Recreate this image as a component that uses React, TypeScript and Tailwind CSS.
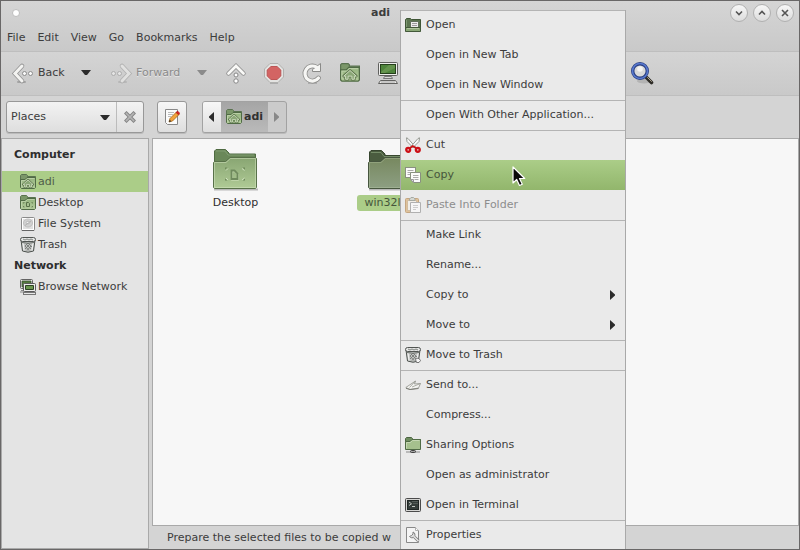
import React from "react";

type IconProps = { className?: string };

/* ---------- folder artwork ---------- */

function SmallFolder({ children, className = "size-4" }: IconProps & { children?: React.ReactNode }) {
  return (
    <svg viewBox="0 0 16 16" className={`shrink-0 ${className}`} aria-hidden="true">
      <defs>
        <linearGradient id="sf" x1="0" y1="0" x2="0" y2="1">
          <stop offset="0" stopColor="#94b37e" />
          <stop offset="1" stopColor="#b3cb9c" />
        </linearGradient>
      </defs>
      <path d="M.5 13V1.500L1.500.5H6.500L7.500 1.500V2.500H15.500V10H.5z" fill="#7b9769" stroke="#5a7350" />
      <path d="M.5 13.500V5.500H5L7 3.500H15.500V13.500L14.500 14.500H1.500z" fill="url(#sf)" stroke="#506b45" />
      <path d="M1.500 12.500V6.500H5.500L7.500 4.500H14.500" fill="none" stroke="#c6d9b3" strokeOpacity=".7" />
      {children}
    </svg>
  );
}

function HomeFolder({ className }: IconProps) {
  return (
    <SmallFolder className={className}>
      <path d="M3 10.500L8 6L13 10.500H11.500V13H9.500V10.500H6.500V13H4.500V10.500z" fill="#a9c492" stroke="#60794f" strokeWidth="2.200" strokeLinejoin="round" />
      <path d="M3 10.500L8 6L13 10.500H11.500V13H9.500V10.500H6.500V13H4.500V10.500z" fill="#8ba777" stroke="#cfdec0" strokeWidth=".8" strokeLinejoin="round" />
    </SmallFolder>
  );
}

function DesktopFolder() {
  return (
    <SmallFolder>
      <path d="M6.500 7.500H8.500L9.500 8.500V11.500H6.500z" fill="none" stroke="#587049" />
      <path d="M3.500 8.500V7.500H4.500M11.500 7.500H12.500V8.500M3.500 11V12H4.500M11.500 12H12.500V11" fill="none" stroke="#6c8559" />
    </SmallFolder>
  );
}

function OpenFolder() {
  return (
    <svg viewBox="0 0 16 16" className="size-4 shrink-0" aria-hidden="true">
      <path d="M.5 14V2.500L1.500 1.500H5.500L6.500 2.500H15.500V14z" fill="#5b7550" stroke="#3f5536" />
      <path d="M1.500 3V12" stroke="#7e9973" />
      <path d="M5.500 4.500H13.500V11H5.500z" fill="#ececec" stroke="#60705a" />
      <path d="M7 6.500H12M7 8.500H12" stroke="#9b9b9b" />
      <path d="M.5 10.500H15.500V14.500H.5z" fill="#8aa877" stroke="#43593a" />
      <path d="M2 11.500H14" stroke="#b0c69f" />
    </svg>
  );
}

function SharedFolder() {
  return (
    <svg viewBox="0 0 16 16" className="size-4 shrink-0" aria-hidden="true">
      <path d="M.5 11V1.500L1.500.5H6.500L7.500 1.500V2.500H15.500V8z" fill="#6f8d60" stroke="#4c6542" />
      <path d="M.5 12.500V4.500H5L7 2.500H15.500V12.500z" fill="#a5c08d" stroke="#506b45" />
      <path d="M1.500 11.500V5.500H5.500L7.500 3.500H14.500" fill="none" stroke="#c5d7b3" />
      <path d="M1 15H15" stroke="#8a8a8a" />
      <rect x="5.500" y="13.500" width="5" height="2" rx="1" fill="#a4a4a4" stroke="#424242" />
    </svg>
  );
}

function LargeFolder({ active = false }: { active?: boolean }) {
  const id = active ? "fa" : "fn";
  return (
    <svg viewBox="0 0 48 44" className="h-[44px] w-[48px]" aria-hidden="true">
      <defs>
        <linearGradient id={id} x1="0" y1="0" x2="0" y2="1">
          <stop offset="0" stopColor={active ? "#77885f" : "#88a572"} />
          <stop offset="1" stopColor={active ? "#8d9f83" : "#b0cb96"} />
        </linearGradient>
      </defs>
      <path d="M2 40.500H46" stroke="#000" strokeOpacity=".25" strokeWidth="2" />
      <path
        d={active
          ? "M2.500 36V3L4 1.500H14.500L18 5V6.500H43.500V36z"
          : "M2.500 36V2L4 .5H13.500L17 4V5H43.500V36z"}
        fill={active ? "#4a5c3f" : "#6a8859"}
        stroke={active ? "#37462f" : "#4f6b42"}
      />
      <path d={active ? "M4 3.500H14L17 7.500H42" : "M4 2H13L16 6H42"} fill="none" stroke="#91ab82" strokeOpacity=".6" />
      <path d="M1.500 38.500V13.500L2.500 12.500H13.500L18 8.500H43.500L44.500 9.500V38.500L43.500 39.500H2.500z" fill={`url(#${id})`} stroke={active ? "#47563f" : "#587149"} />
      <path d="M2.500 38.500V13.500H14L18.500 9.500H43.500V38.500z" fill="none" stroke="#d5e5c4" strokeOpacity={active ? ".25" : ".5"} />
      {!active && (
        <g fill="none">
          <path d="M20 22.500H23L26 25.500V31H20z" stroke="#c6dab1" strokeWidth="1.500" />
          <path d="M19.500 21.500H22.500L25.500 24.500V30H19.500z" stroke="#6f8a5d" strokeWidth="1.800" />
          <path d="M13 20.500V18.500H15.500L13 20.500zM30.500 18.500H33V20.500zM13 29.500V31.500H15.500zM33 29.500V31.500H30.500z" fill="#6c8759" />
          <path d="M14 21.500L16 19.500M30 19.500L32.500 21.500M14 29L16 31M30 31L32.500 29" stroke="#cfe0be" />
        </g>
      )}
    </svg>
  );
}

/* ---------- sidebar and menu icons ---------- */

function DriveIcon() {
  return (
    <svg viewBox="0 0 16 16" className="size-4 shrink-0" aria-hidden="true">
      <rect x="1.500" y="1.500" width="13" height="13" rx="1" fill="#efefef" stroke="#8a8a8a" />
      <rect x="2.500" y="2.500" width="11" height="11" fill="#e0e0e0" stroke="#fff" />
      <ellipse cx="8" cy="7" rx="4.500" ry="4" fill="#d2d2d2" stroke="#c0c0c0" />
      <ellipse cx="8" cy="6.500" rx="1.800" ry="1.300" fill="#f2f2f2" stroke="#aaa" strokeWidth=".7" />
      <path d="M5 9.500L11 5" stroke="#b3b3b3" />
      <path d="M2 14.500H14" stroke="#666" />
    </svg>
  );
}

function TrashIcon({ moving = false }: { moving?: boolean }) {
  return (
    <svg viewBox="0 0 16 16" className="size-4 shrink-0" aria-hidden="true">
      <path d="M1 3L2.500 14Q8 16.500 13.500 14L15 3z" fill="#c3c5c3" stroke="#4c514d" />
      <path d="M3 6L4 13.500M13 6L12 13.500" stroke="#efefef" strokeWidth="1.200" />
      <path d="M6 7L11 12M5 9L9 13.500M8 6L12 10M10 7L5 12M11 9L7 13.500M8 6L5 9" stroke="#777a77" strokeWidth=".9" />
      <rect x=".5" y=".5" width="15" height="4" rx="2" fill="#e4e5e4" stroke="#515552" />
      <path d="M3 2L5 3L7 2L9 3L11 2L13 3" fill="none" stroke="#838783" />
      <path d="M2 5.500Q8 7 14 5.500" fill="none" stroke="#6b706c" />
      {moving && (
        <path d="M10.500 12.500Q12 10.500 14 11.500L15.500 13.500L14 15.500H11.500z" fill="#f5f5f5" stroke="#666" strokeWidth=".9" />
      )}
    </svg>
  );
}

function NetworkIcon() {
  return (
    <svg viewBox="0 0 16 16" className="size-4 shrink-0" aria-hidden="true">
      <rect x=".5" y=".5" width="12" height="9" rx="1" fill="#e9e9e9" stroke="#636363" />
      <path d="M2 2H11V8H2z" fill="#547a3e" stroke="#3a5133" strokeWidth=".8" />
      <path d="M1 11.500H4M0 13H4" stroke="#888" />
      <rect x="3.500" y="4.500" width="12" height="8" rx="1" fill="#ededed" stroke="#5b5b5b" />
      <path d="M5.500 6.500H13.500V10.500H5.500z" fill="#6a964f" stroke="#2d4324" />
      <rect x="3.500" y="13.500" width="12" height="2" fill="#e8e8e8" stroke="#777" />
    </svg>
  );
}

function ScissorsIcon() {
  return (
    <svg viewBox="0 0 16 16" className="size-4 shrink-0" aria-hidden="true">
      <path d="M1.500.8L2 4.500L8.500 11L10 9.500L3 1.500z" fill="#f8f8f8" stroke="#8b8f88" strokeWidth=".9" />
      <path d="M14.500.8L14 4.500L7.500 11L6 9.500L13 1.500z" fill="#f8f8f8" stroke="#8b8f88" strokeWidth=".9" />
      <path d="M5 11L7.800 9L11 11" fill="none" stroke="#c81414" strokeWidth="1.800" />
      <circle cx="3.200" cy="12.800" r="2" fill="#e6b0b0" stroke="#cc0f16" strokeWidth="2.200" />
      <circle cx="12.800" cy="12.800" r="2" fill="#e6b0b0" stroke="#cc0f16" strokeWidth="2.200" />
    </svg>
  );
}

function CopyIcon() {
  return (
    <svg viewBox="0 0 16 16" className="size-4 shrink-0" aria-hidden="true">
      <rect x=".5" y=".5" width="10" height="10" fill="#fbfbfb" stroke="#899080" />
      <path d="M2.500 3.500H8.500M2.500 5.500H8.500M2.500 7.500H6" stroke="#aaa" />
      <path d="M5.500 5.500H15.500V15.500H8.500L5.500 12.500z" fill="#fbfbfb" stroke="#899080" />
      <path d="M8 8.500H13.500M8 10.500H13.500M9.500 12.500H13.500" stroke="#aaa" />
      <path d="M5.500 12.500H8.500V15.500z" fill="#ddd" stroke="#999" />
    </svg>
  );
}

function PasteIcon() {
  return (
    <svg viewBox="0 0 16 16" className="size-4 shrink-0" aria-hidden="true">
      <rect x=".5" y="1.500" width="13" height="14" rx="1" fill="#dfc29b" stroke="#c4a681" />
      <rect x="2.500" y="3.500" width="9" height="10" fill="#f1eee8" stroke="#d2bda0" />
      <path d="M4.500 3.500V2L6 .5H8.500L10 2V3.500z" fill="#d5d8d2" stroke="#a6aaa3" />
      <path d="M5.500 5.500H15.500V15.500H5.500z" fill="#f6f6f6" stroke="#b0b0b0" />
      <path d="M8 8.500H13M8 10.500H13M8 12.500H11" stroke="#ccc" />
    </svg>
  );
}

function SendIcon() {
  return (
    <svg viewBox="0 0 16 16" className="size-4 shrink-0" aria-hidden="true">
      <path d="M.8 10.500L10.500 4L9.500 7L15.500 6.500L13.500 11L5 12.500z" fill="#f4f4f2" stroke="#989a93" strokeWidth=".9" strokeLinejoin="round" />
      <path d="M4.500 10.500L10.500 4M7 10L15.500 6.500" fill="none" stroke="#989a92" strokeWidth=".8" />
      <path d="M1 11.300L5 12.500L13.500 11.500" fill="none" stroke="#7c7e77" />
    </svg>
  );
}

function TerminalIcon() {
  return (
    <svg viewBox="0 0 16 16" className="size-4 shrink-0" aria-hidden="true">
      <rect x=".5" y="1.500" width="15" height="13" rx="1" fill="#d6d6d4" stroke="#4b4b4b" />
      <rect x="2.500" y="3.500" width="11" height="9" fill="#343d3a" stroke="#1e2523" />
      <path d="M4 5L6.500 6.800L4 8.500M7 9.500H10" fill="none" stroke="#d0d5d0" strokeWidth=".9" />
      <path d="M7 4.500H13M8 6.500H13" stroke="#535c58" />
    </svg>
  );
}

function PropertiesIcon() {
  return (
    <svg viewBox="0 0 16 16" className="size-4 shrink-0" aria-hidden="true">
      <path d="M1.500.5H10.500L13.500 3.500V15.500H1.500z" fill="#f5f5f5" stroke="#898989" />
      <path d="M10.500 .5V3.500H13.500" fill="#fff" stroke="#b0b0b0" />
      <path d="M8 5A3 3 0 1 1 4.500 9.500L6.500 8.500L8 7z" fill="#dedede" stroke="#808080" />
      <path d="M9.500 10L13.500 14" stroke="#777" strokeWidth="3" />
      <path d="M9 9.500L13.500 14" stroke="#e8e8e8" strokeWidth="1.500" />
    </svg>
  );
}

/* ---------- toolbar icons ---------- */

function BackIcon({ forward = false }: { forward?: boolean }) {
  return (
    <svg viewBox="0 0 24 24" className={forward ? "size-6 shrink-0 -scale-x-100 opacity-50" : "size-6 shrink-0"} aria-hidden="true">
      <path d="M7 21H14" stroke="#000" strokeOpacity=".2" strokeWidth="2" strokeLinecap="round" />
      <path d="M11 5L4 12.500L11 20" fill="none" stroke="#949494" strokeWidth="4.600" strokeLinecap="round" />
      <path d="M11 5L4 12.500L11 20" fill="none" stroke="#f3f3f1" strokeWidth="3" strokeLinecap="round" />
      <circle cx="13.500" cy="12.500" r="2" fill="#fafafa" stroke="#8d8d8d" />
      <circle cx="19.500" cy="12.500" r="2" fill="#fafafa" stroke="#8d8d8d" />
    </svg>
  );
}

function UpIcon() {
  return (
    <svg viewBox="0 0 24 24" className="size-6" aria-hidden="true">
      <path d="M4.500 12.500L12 5L19.500 12.500" fill="none" stroke="#8d8d8d" strokeWidth="4.400" strokeLinecap="round" />
      <path d="M4.500 12.500L12 5L19.500 12.500" fill="none" stroke="#f9f9f7" strokeWidth="2.800" strokeLinecap="round" />
      <circle cx="12" cy="14" r="2" fill="#fff" stroke="#858585" />
      <circle cx="12" cy="20" r="2.200" fill="#fff" stroke="#858585" />
    </svg>
  );
}

function StopIcon() {
  return (
    <svg viewBox="0 0 24 24" className="size-6" aria-hidden="true">
      <path d="M8 22H16" stroke="#000" strokeOpacity=".15" strokeWidth="2" />
      <path d="M8 2.500H16L21.500 8V16L16 21.500H8L2.500 16V8z" fill="#e3e3e1" stroke="#b0b0ae" />
      <path d="M9 5.500H15L18.800 9V15L15 18.500H9L5.200 15V9z" fill="#d36463" stroke="#bd5555" />
    </svg>
  );
}

function ReloadIcon() {
  return (
    <svg viewBox="0 0 24 24" className="size-6" aria-hidden="true">
      <path d="M8 22H17" stroke="#000" strokeOpacity=".15" strokeWidth="2" />
      <path d="M16.500 6.200A7.500 7.500 0 1 0 18.500 17" fill="none" stroke="#8a8a88" strokeWidth="4.800" strokeLinecap="round" />
      <path d="M20.500 2.500V10.500H12.500V8.500z" fill="#f6f6f4" stroke="#8a8a88" strokeLinejoin="round" />
      <path d="M16.500 6.200A7.500 7.500 0 1 0 18.500 17" fill="none" stroke="#f6f6f4" strokeWidth="3.200" strokeLinecap="round" />
    </svg>
  );
}

function ComputerIcon() {
  return (
    <svg viewBox="0 0 24 24" className="size-6" aria-hidden="true">
      <rect x="2.500" y="1.500" width="19" height="13" rx="1" fill="#ededeb" stroke="#60605e" />
      <rect x="4.500" y="3.500" width="15" height="9" fill="#4e843b" stroke="#25401c" />
      <path d="M5 11L13 4H19V7L9 12H5z" fill="#78a35f" fillOpacity=".55" />
      <path d="M8.500 15.500H15.500L16.500 17.500H7.500z" fill="#d7d7d5" stroke="#777" />
      <path d="M4.500 19.500L2.500 22.500H21.500L19.500 19.500z" fill="#f0f0ee" stroke="#626260" />
      <path d="M5 21H19" stroke="#a0a0a0" />
    </svg>
  );
}

function SearchIcon() {
  return (
    <svg viewBox="0 0 24 24" className="size-6" aria-hidden="true">
      <ellipse cx="14" cy="20" rx="7" ry="2.500" fill="#000" fillOpacity=".12" />
      <path d="M16.500 16.500L21.500 21.500" stroke="#2d2b26" strokeWidth="3.600" strokeLinecap="round" />
      <path d="M17.500 16.500L21.500 20.500" stroke="#aaa08b" strokeWidth="1" strokeLinecap="round" />
      <circle cx="10" cy="10" r="7.300" fill="#d9d9d9" stroke="#2a3f80" strokeWidth="3.400" />
      <circle cx="10" cy="10" r="7.500" fill="none" stroke="#5878cf" strokeWidth="1.600" />
      <circle cx="10" cy="8" r="2.800" fill="#f4f4f4" />
    </svg>
  );
}

function PencilNoteIcon() {
  return (
    <svg viewBox="0 0 16 16" className="size-4" aria-hidden="true">
      <path d="M1.500 .5H13.500V15.500H3.500L1.500 13.500z" fill="#fbfbfb" stroke="#888" />
      <path d="M4 3.500H10M4 5.500H9M4 7.500H7" stroke="#bbb" />
      <path d="M5 13L6 9.500L12.500 3L15 5.500L8.500 12z" fill="#f2a33b" stroke="#9e6319" strokeWidth=".8" />
      <path d="M12 3.500L13.500 2L15.800 4.300L14.500 5.800z" fill="#d52020" stroke="#a51414" strokeWidth=".6" />
      <path d="M5 13L5.700 10.700L7.300 12.200z" fill="#2b2b2b" />
    </svg>
  );
}

function Triangle({ dir, className = "fill-[#2b2b2b]" }: { dir: "down" | "left" | "right" } & IconProps) {
  if (dir === "down")
    return (
      <svg viewBox="0 0 10 6" className={`h-[6px] w-[10px] shrink-0 ${className}`} aria-hidden="true">
        <path d="M0 0H10L6 5H4z" />
      </svg>
    );
  return (
    <svg viewBox="0 0 6 10" className={`h-[10px] w-[6px] shrink-0 ${className}`} aria-hidden="true">
      <path d={dir === "left" ? "M5 0V10L0 5.500V4.500z" : "M0 0V10L5 5.500V4.500z"} />
    </svg>
  );
}

function CloseGlyph() {
  return (
    <svg viewBox="0 0 12 12" className="size-3" aria-hidden="true">
      <path d="M2.500 2.500L9.500 9.500M9.500 2.500L2.500 9.500" stroke="#858585" strokeWidth="3.600" strokeLinecap="square" />
      <path d="M2.500 2.500L9.500 9.500M9.500 2.500L2.500 9.500" stroke="#b5b5b5" strokeWidth="1.600" strokeLinecap="square" />
    </svg>
  );
}

function Pointer() {
  return (
    <svg viewBox="0 0 14 21" className="absolute left-[111px] top-[156px] h-[21px] w-[14px]" aria-hidden="true">
      <path d="M1 1V17L4.700 13.500L7.500 19.500L10.300 18.200L7.500 12.500H12.700z" fill="#0a0a0a" stroke="#fff" strokeWidth="1.200" strokeLinejoin="round" />
    </svg>
  );
}

/* ---------- page parts ---------- */

const windowButtons = [
  { label: "Minimize", d: "M3 4.500L6 7.500L9 4.500" },
  { label: "Maximize", d: "M3 7.500L6 4.500L9 7.500" },
  { label: "Close", d: "M3 3L9 9M9 3L3 9" },
];

function TitleBar() {
  return (
    <header className="flex h-6 items-center pl-[11px] pr-[5px]">
      <span className="size-2 rounded-full border border-[#bdbdbd] bg-white" />
      <h1 className="flex-1 pl-[11px] text-center font-bold">adi</h1>
      <div className="flex gap-[5px]">
        {windowButtons.map((b) => (
          <button key={b.label} aria-label={b.label} className="flex size-[18px] items-center justify-center rounded-full border border-[#b0b0b0] bg-gradient-to-b from-[#f7f7f7] to-[#dcdcdc]">
            <svg viewBox="0 0 12 12" className="size-3 shrink-0" aria-hidden="true">
              <path d={b.d} fill="none" stroke="#555555" strokeWidth="1.600" />
            </svg>
          </button>
        ))}
      </div>
    </header>
  );
}

function Toolbar() {
  return (
    <div className="flex h-[44px] shrink-0 items-center border-b border-[#bebebe] bg-gradient-to-b from-[#d4d4d4] to-[#c9c9c9] pb-[2px] pl-[10px]">
      <button className="flex w-[70px] items-center gap-[3px]">
        <BackIcon />
        Back
      </button>
      <button aria-label="Back history" className="flex w-[28px] items-center">
        <Triangle dir="down" />
      </button>
      <button disabled className="flex w-[88px] items-center gap-[3px] text-[#8b8b8b] text-shadow-[0_1px_0_#e6e6e6]">
        <BackIcon forward />
        Forward
      </button>
      <button disabled aria-label="Forward history" className="flex w-[20px] items-center">
        <Triangle dir="down" className="fill-[#8b8b8b]" />
      </button>
      <button aria-label="Up" className="flex w-[38px] justify-center"><UpIcon /></button>
      <button aria-label="Stop" className="flex w-[38px] justify-center"><StopIcon /></button>
      <button aria-label="Reload" className="flex w-[38px] justify-center"><ReloadIcon /></button>
      <button aria-label="Home" className="flex w-[38px] justify-center"><HomeFolder className="size-5" /></button>
      <button aria-label="Computer" className="flex w-[38px] justify-center"><ComputerIcon /></button>
      <button aria-label="Search" className="ml-[216px] flex w-[38px] justify-center"><SearchIcon /></button>
    </div>
  );
}

function LocationBar() {
  return (
    <div className="flex h-[42px] shrink-0 items-center pl-[5px]">
      <div className="flex h-8 w-[138px] rounded-[3px] border border-[#989898] bg-gradient-to-b from-[#f3f3f3] to-[#dedede] shadow-[0_1px_0_#bbb]">
        <div className="relative flex-1 border-r border-[#bcbcbc]">
          <select aria-label="Side pane" className="size-full appearance-none bg-transparent pl-1 outline-none">
            <option>Places</option>
          </select>
          <span className="pointer-events-none absolute right-[6px] top-[13px]">
            <Triangle dir="down" />
          </span>
        </div>
        <button aria-label="Close side pane" className="flex w-[26px] items-center justify-center">
          <CloseGlyph />
        </button>
      </div>
      <button aria-label="Edit location" className="ml-[13px] flex h-8 w-[30px] items-center justify-center rounded-[3px] border border-[#989898] bg-gradient-to-b from-[#f7f7f7] to-[#dedede] shadow-[0_1px_0_#bbb]">
        <PencilNoteIcon />
      </button>
      <nav aria-label="Path" className="ml-[15px] flex h-8 overflow-hidden rounded-[3px] border border-[#a2a2a2] bg-[#cbcbcb] shadow-[0_1px_0_#bbb]">
        <button aria-label="Previous" className="flex w-[18px] items-center justify-center bg-gradient-to-b from-[#f7f7f7] to-[#dedede]">
          <Triangle dir="left" />
        </button>
        <button className="flex w-[47px] items-center justify-center gap-[2px] bg-gradient-to-b from-[#a5a5a5] to-[#bababa] font-bold text-[#303030]">
          <HomeFolder />
          adi
        </button>
        <button disabled aria-label="Next" className="flex w-[18px] items-center justify-center">
          <Triangle dir="right" className="fill-[#888888]" />
        </button>
      </nav>
    </div>
  );
}

function Place({ icon, label, selected = false }: { icon: React.ReactNode; label: string; selected?: boolean }) {
  return (
    <li>
      <a href="#" className={`flex h-[21px] items-center gap-[2px] pl-[18px] ${selected ? "bg-[#abcd88] text-[#4f5c48]" : ""}`}>
        {icon}
        {label}
      </a>
    </li>
  );
}

function Sidebar() {
  return (
    <aside className="w-[148px] shrink-0 border border-[#a9a9a9] bg-[#e4e4e4] pt-[5px]">
      <h2 className="mb-[6px] h-[21px] pl-3 font-bold leading-[21px] text-[#2e2e2e]">Computer</h2>
      <ul>
        <Place icon={<HomeFolder />} label="adi" selected />
        <Place icon={<DesktopFolder />} label="Desktop" />
        <Place icon={<DriveIcon />} label="File System" />
        <Place icon={<TrashIcon />} label="Trash" />
      </ul>
      <h2 className="h-[21px] pl-3 font-bold leading-[21px] text-[#2e2e2e]">Network</h2>
      <ul>
        <Place icon={<NetworkIcon />} label="Browse Network" />
      </ul>
    </aside>
  );
}

type MenuEntry = { label: string; icon?: React.ReactNode; state?: "active" | "disabled"; sub?: boolean; line?: boolean };

const menuEntries: MenuEntry[] = [
  { label: "Open", icon: <OpenFolder />, line: true },
  { label: "Open in New Tab" },
  { label: "Open in New Window" },
  { label: "Open With Other Application...", line: true },
  { label: "Cut", icon: <ScissorsIcon />, line: true },
  { label: "Copy", icon: <CopyIcon />, state: "active" },
  { label: "Paste Into Folder", icon: <PasteIcon />, state: "disabled" },
  { label: "Make Link", line: true },
  { label: "Rename..." },
  { label: "Copy to", sub: true },
  { label: "Move to", sub: true },
  { label: "Move to Trash", icon: <TrashIcon moving />, line: true },
  { label: "Send to...", icon: <SendIcon />, line: true },
  { label: "Compress..." },
  { label: "Sharing Options", icon: <SharedFolder /> },
  { label: "Open as administrator" },
  { label: "Open in Terminal", icon: <TerminalIcon /> },
  { label: "Properties", icon: <PropertiesIcon />, line: true },
];

function ContextMenu() {
  return (
    <div role="menu" className="absolute left-[399px] top-[9px] w-[226px] border-x border-[#a9a9a9] bg-[#eaeaea]">
      {menuEntries.map((m) => {
        const tone =
          m.state === "active"
            ? "bg-gradient-to-b from-[#abcd88] to-[#92b66c] text-[#46553b]"
            : m.state === "disabled"
              ? "text-[#8d8d8d]"
              : "";
        return (
          <button
            key={m.label}
            role="menuitem"
            disabled={m.state === "disabled"}
            className={`flex h-[30px] w-full items-center gap-[5px] pl-1 pr-[9px] text-left ${m.line ? "shadow-[inset_0_1px_0_#b4b4b4]" : ""} ${tone}`}
          >
            <span className="size-4 shrink-0">{m.icon}</span>
            <span className="flex-1 whitespace-nowrap pb-px">{m.label}</span>
            {m.sub && <Triangle dir="right" />}
          </button>
        );
      })}
      <Pointer />
    </div>
  );
}

export default function App() {
  return (
    <div className="relative flex h-screen flex-col overflow-hidden border border-[#696767] bg-[#d4d4d4] font-['DejaVu_Sans',sans-serif] text-[11px] leading-[14px] text-[#3c3c3c]">
      <div className="h-[51px] shrink-0 border-b border-[#bebebe] bg-gradient-to-b from-[#d5d5d5] to-[#c9c9c9]">
        <TitleBar />
        <nav className="flex h-[26px] items-center gap-3 pl-[6px]">
          {["File", "Edit", "View", "Go", "Bookmarks", "Help"].map((m) => (
            <button key={m}>{m}</button>
          ))}
        </nav>
      </div>
      <Toolbar />
      <LocationBar />
      <div className="flex min-h-0 flex-1 gap-[3px]">
        <Sidebar />
        <div className="flex min-w-0 flex-1 flex-col">
          <main className="flex flex-1 items-start border border-[#a9a9a9] bg-[#f7f7f7] pl-[5px] pt-[10px]">
            <figure className="flex w-[155px] flex-col items-center">
              <LargeFolder />
              <figcaption className="mt-[2px] px-2 py-px text-[#2e2e2e]">Desktop</figcaption>
            </figure>
            <figure className="flex w-[155px] flex-col items-center">
              <LargeFolder active />
              <figcaption className="mt-[2px] rounded-[3px] bg-[#abcd88] px-2 py-px text-[#46553b]">win32libs</figcaption>
            </figure>
          </main>
          <footer className="flex h-[23px] shrink-0 items-center overflow-hidden whitespace-nowrap pl-[15px]">
            Prepare the selected files to be copied w
          </footer>
        </div>
      </div>
      <ContextMenu />
    </div>
  );
}
